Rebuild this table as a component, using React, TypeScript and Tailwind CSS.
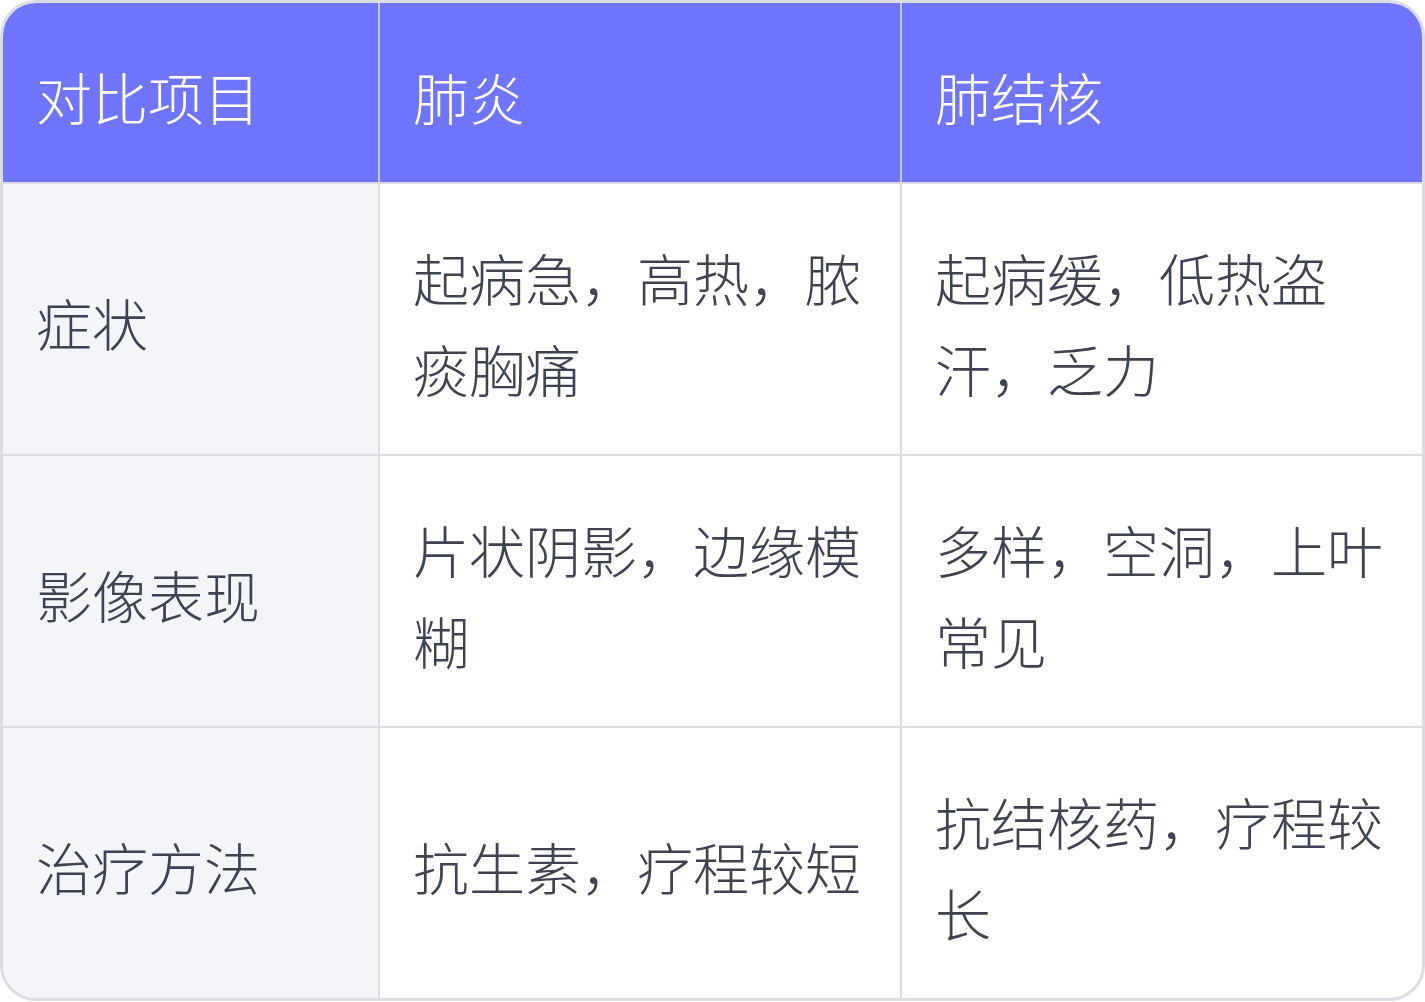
const rows = [
  { label: '症状', a: '起病急，高热，脓痰胸痛', b: '起病缓，低热盗汗，乏力' },
  { label: '影像表现', a: '片状阴影，边缘模糊', b: '多样，空洞，上叶常见' },
  { label: '治疗方法', a: '抗生素，疗程较短', b: '抗结核药，疗程较长' },
];

const cell = 'pl-[33px] pr-[28px] pt-[5px] flex items-center text-[56px] leading-[91px]';

export default function App() {
  return (
    <div
      className="w-[1425px] h-[1002px] bg-white"
      style={{ fontFamily: '"Noto Sans CJK SC", "Noto Sans", sans-serif' }}
    >
      <div className="h-[1001px] border-[3px] border-[#dcdde3] rounded-[36px] overflow-hidden flex flex-col font-light">
        <div className="grid grid-cols-[377px_522px_1fr] h-[181px] bg-[#6f75ff] text-white border-b-2 border-[#dcdde3]">
          <div className={`${cell} border-r-2 border-[#c9cbf6]`}>对比项目</div>
          <div className={`${cell} border-r-2 border-[#c9cbf6]`}>肺炎</div>
          <div className={cell}>肺结核</div>
        </div>
        {rows.map((r, i) => (
          <div
            key={r.label}
            className={`grid grid-cols-[377px_522px_1fr] flex-1 text-[#3f4251] ${i < rows.length - 1 ? 'border-b-2 border-[#dcdde3]' : ''}`}
          >
            <div className={`${cell} bg-[#f4f5f9] border-r-2 border-[#dcdde3]`}>{r.label}</div>
            <div className={`${cell} border-r-2 border-[#dcdde3]`}>{r.a}</div>
            <div className={cell}>{r.b}</div>
          </div>
        ))}
      </div>
    </div>
  );
}
